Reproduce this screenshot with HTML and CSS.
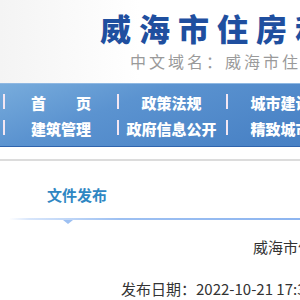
FILE: index.html
```html
<!DOCTYPE html>
<html lang="zh-CN">
<head>
  <meta charset="UTF-8">
  <meta name="viewport" content="width=device-width, initial-scale=1.0">
  <title>威海市住房和城乡建设局</title>
  <link rel="stylesheet" href="styles.css">
</head>
<body>
  <div class="header">
    <div class="site-name">威海市住房和城乡建设局</div>
    <div class="domain">中文域名：威海市住房和城乡建设局.政务</div>
  </div>

  <div class="nav">
    <ul class="nav-row">
      <li class="first"><a href="#">首　　页</a></li>
      <li><a href="#">政策法规</a></li>
      <li><a href="#">城市建设</a></li>
    </ul>
    <ul class="nav-row">
      <li class="first"><a href="#">建筑管理</a></li>
      <li><a href="#">政府信息公开</a></li>
      <li><a href="#">精致城市</a></li>
    </ul>
  </div>

  <div class="divider"></div>

  <div class="tabs">
    <span class="tab-title">文件发布</span>
  </div>

  <div class="article">
    <div class="article-title">威海市住房和城乡建设局关于印发通知</div>
    <div class="article-date">发布日期：2022-10-21 17:30</div>
  </div>
</body>
</html>
```

FILE: styles.css
```css
body {
  margin: 0;
  font-family: "Noto Sans CJK SC", "Noto Sans", sans-serif;
  color: #333;
  background: #fff;
  overflow: hidden;
  white-space: nowrap;
}
.header {
  height: 83px;
  box-sizing: border-box;
  padding: 12px 0 0 100px;
  background: linear-gradient(90deg, #f4f4f4 0, #fbfbfb 90px, #fff 140px);
}
.site-name {
  font-size: 31px;
  line-height: 31px;
  font-weight: 900;
  letter-spacing: 8px;
  color: #1f4f9f;
}
.domain {
  margin-top: 10px;
  padding-left: 30px;
  font-size: 16px;
  line-height: 16px;
  letter-spacing: 3px;
  color: #9a9a9a;
}
.nav {
  padding: 5px 0;
  border-top: 1px solid #8fb8e2;
  border-bottom: 1px solid #2f64ad;
  background: linear-gradient(160deg, #78acdc 0, #5b93d0 60px, #4a83c6 140px, #3f78bf 300px);
}
.nav-row {
  display: flex;
  margin: 0;
  padding: 0;
  list-style: none;
}
.nav-row li {
  position: relative;
  width: 109px;
  flex: none;
  height: 26px;
  line-height: 26px;
  text-align: center;
}
.nav-row li.first {
  width: 117px;
}
.nav-row li::before {
  content: "";
  position: absolute;
  left: 0;
  top: 5px;
  width: 2px;
  height: 15px;
  background: #f3e6f2;
}
.nav-row li.first::before {
  left: 3px;
}
.nav-row a {
  color: #fff;
  font-size: 15px;
  font-weight: 900;
  text-decoration: none;
}
.nav-row li.first a {
  padding-left: 5px;
}
.divider {
  height: 2px;
  margin-top: 12px;
  background: #dcdcdc;
}
.tabs {
  position: relative;
  margin-top: 21px;
  padding: 0 0 12px 47px;
  border-bottom: 2px solid transparent;
  border-image: linear-gradient(90deg, #fff 10px, #d8e6fb 30px, #9dc0f2 120px, #8db5f0 300px) 1;
}
.tab-title {
  font-size: 15px;
  line-height: 18px;
  font-weight: bold;
  color: #2f87c3;
}
.tabs::after {
  content: "";
  position: absolute;
  left: 63px;
  bottom: -6px;
  border-left: 5px solid transparent;
  border-right: 5px solid transparent;
  border-top: 4px solid #9dc0f2;
}
.article {
  padding-top: 17px;
  font-size: 15px;
  line-height: 20px;
}
.article-title {
  padding-left: 253px;
}
.article-date {
  margin-top: 22px;
  padding-left: 121px;
}
```
